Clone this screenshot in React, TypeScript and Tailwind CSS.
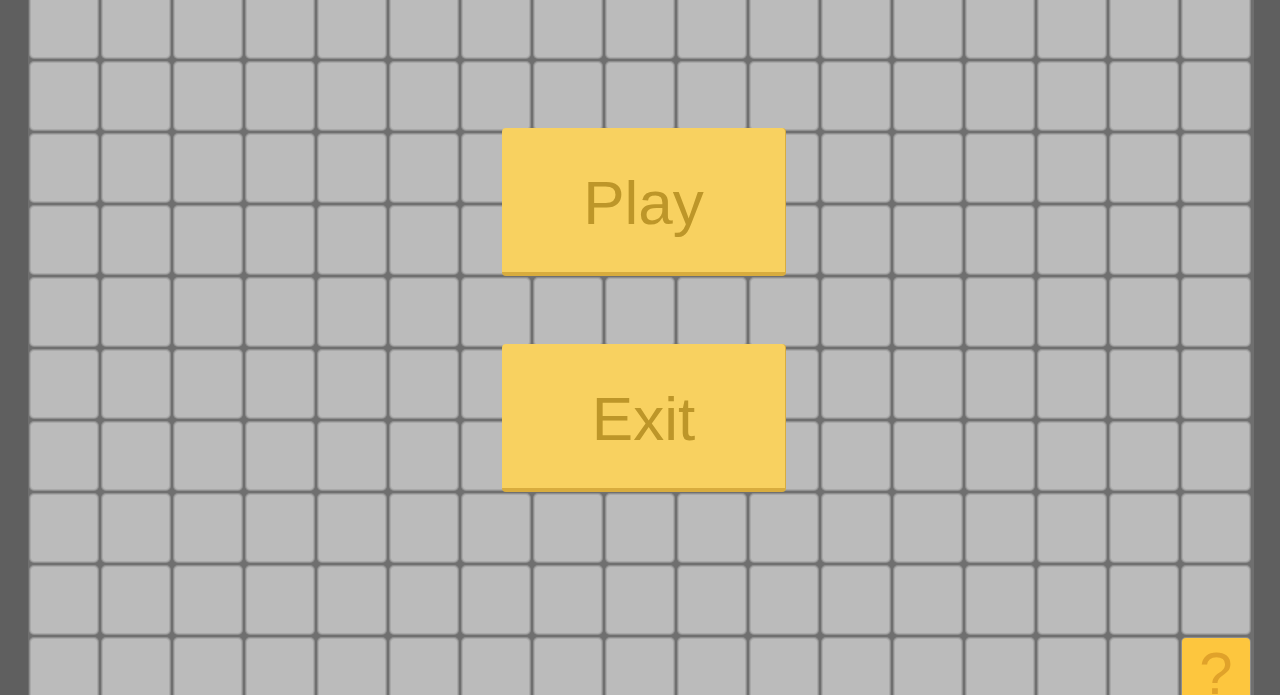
import React from "react";

const COLS = 17;
const ROWS = 10;

function Cell({ last }: { last: boolean }) {
  if (last) {
    return (
      <button className="w-[68px] h-[68px] rounded-[4px] bg-[#fdc63e] shadow-[0_0_0_1px_#8c8c8c] flex justify-center overflow-hidden">
        <span className="font-['Liberation_Sans',Arial,sans-serif] text-[60px] leading-none text-[#e0a22a] pt-[6px]">
          ?
        </span>
      </button>
    );
  }
  return (
    <div className="w-[68px] h-[68px] rounded-[4px] bg-[#bbbbbb] border border-[#a9a9a9] shadow-[0_0_0_1px_#8f8f8f]" />
  );
}

function MenuButton({ label }: { label: string }) {
  return (
    <button className="w-[284px] h-[148px] rounded-[4px] bg-[#f8d160] border-b-4 border-r border-[#d8ac3e] flex items-center justify-center">
      <span className="font-['Liberation_Sans',Arial,sans-serif] text-[62px] leading-none text-[#bd9629] pt-[6px]">
        {label}
      </span>
    </button>
  );
}

export default function App() {
  const cells = Array.from({ length: COLS * ROWS }, (_, i) => i);

  return (
    <div className="w-full h-[695px] bg-[#5f5f5f] overflow-hidden pl-[28px]">
      <div className="relative -mt-[12px] w-[1226px] p-[2px] bg-[#6f6f6f]">
        <div className="grid grid-cols-[repeat(17,68px)] gap-[4px]">
          {cells.map((i) => (
            <Cell key={i} last={i === COLS * ROWS - 1} />
          ))}
        </div>

        {/* Menu */}
        <div className="absolute left-[474px] top-[140px] flex flex-col gap-[68px]">
          <MenuButton label="Play" />
          <MenuButton label="Exit" />
        </div>
      </div>
    </div>
  );
}
